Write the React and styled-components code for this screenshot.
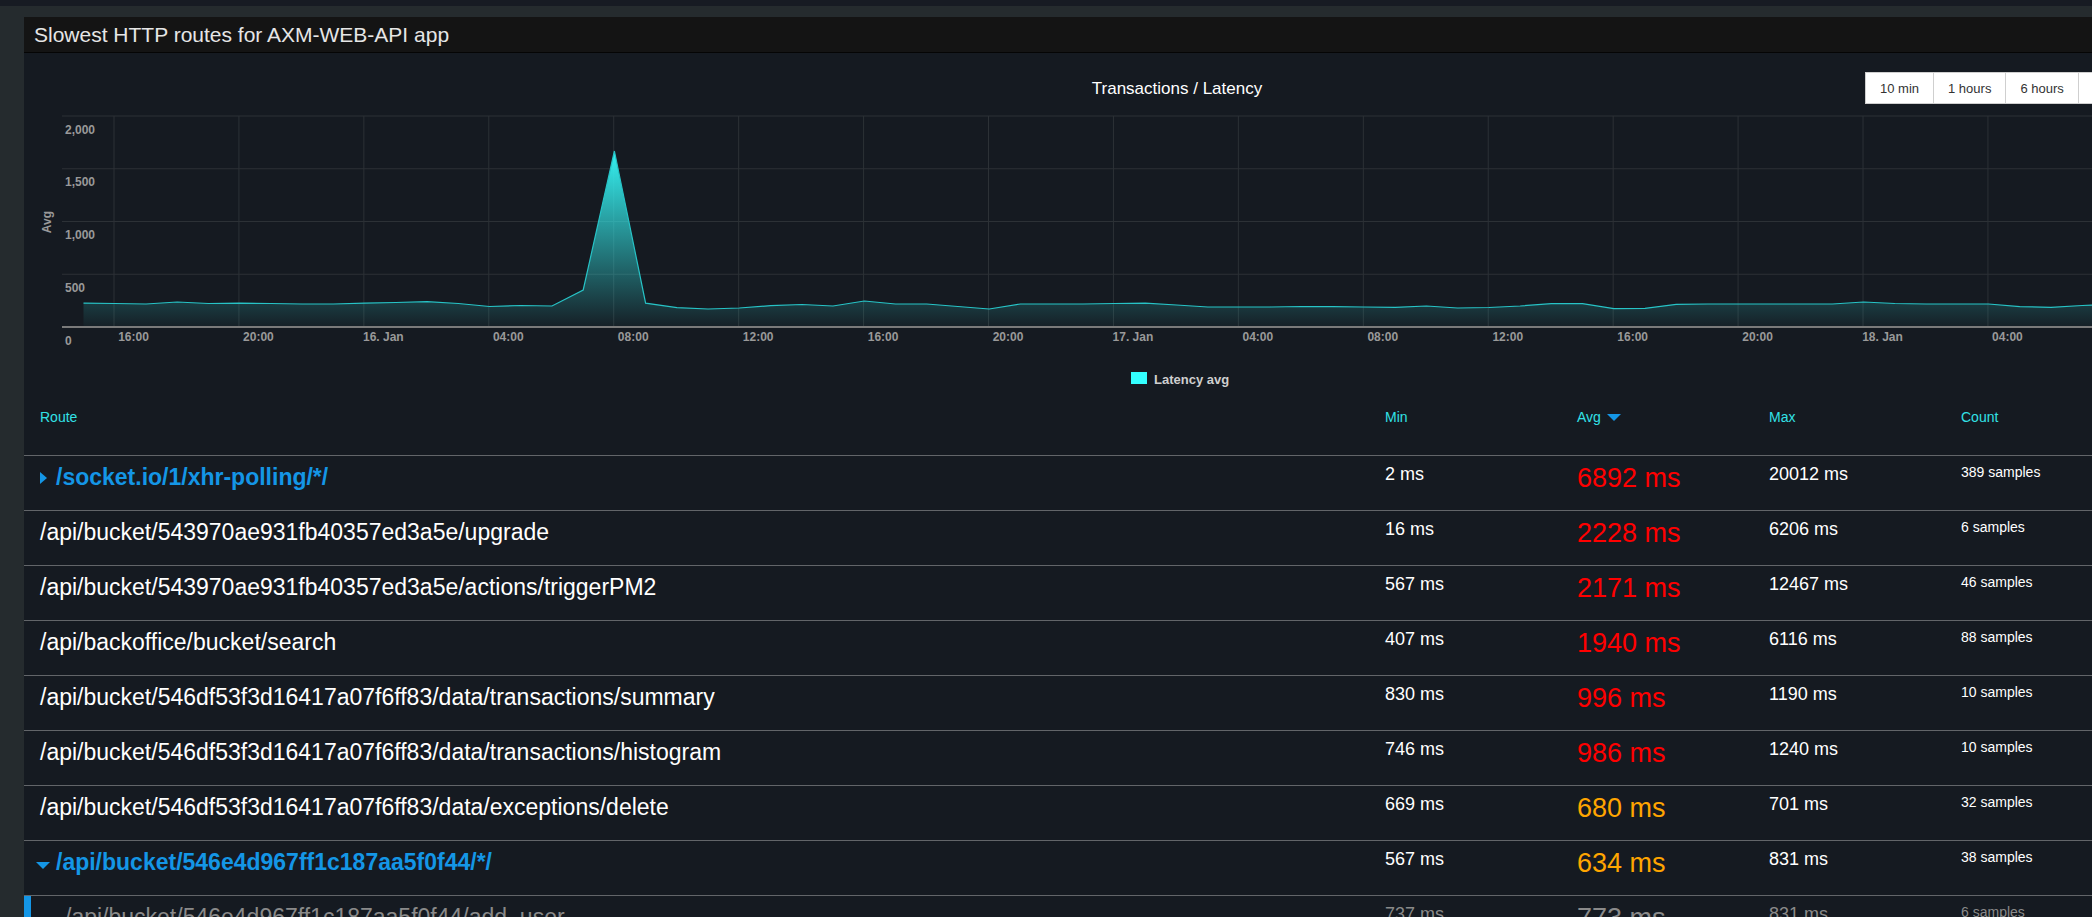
import React from 'react';
import styled, { createGlobalStyle } from 'styled-components';

const GlobalStyle = createGlobalStyle`
  * { box-sizing: border-box; }
  html, body { margin: 0; padding: 0; overflow: hidden; background: #252b2e; }
  body { font-family: "Liberation Sans", Arial, sans-serif; }
`;

const Page = styled.div`
  width: 2200px;
  min-height: 100vh;
  background: #252b2e;
  border-top: 6px solid #171b23;
  padding: 11px 0 0 24px;
`;

const Panel = styled.section`
  width: 2160px;
  background: #151a21;
`;

const PanelHeader = styled.header`
  height: 36px;
  display: flex;
  align-items: center;
  padding-left: 10px;
  background: #141414;
  border-bottom: 1px solid #050505;
  color: #e6e6e6;
  font-size: 21px;
`;

const ChartArea = styled.div`
  position: relative;
  height: 346px;
  svg { display: block; }
`;

const RangeButtons = styled.div`
  position: absolute;
  top: 19px;
  left: 1842px;
  display: flex;
`;

const RangeButton = styled.button`
  height: 32px;
  padding: 0 14px;
  margin-left: -1px;
  background: #fff;
  border: 1px solid #cfcfcf;
  color: #333;
  font-family: "Liberation Sans", Arial, sans-serif;
  font-size: 13px;
  cursor: pointer;
  white-space: nowrap;
`;

const COLS = '1345px repeat(4, 192px)';

const HeadRow = styled.div`
  display: grid;
  grid-template-columns: ${COLS};
  height: 56px;
`;

const HeadCell = styled.div`
  display: flex;
  align-items: center;
  gap: 6px;
  height: 28px;
  padding: 8px 16px 0;
  color: #32e1e6;
  font-size: 14px;
  line-height: 20px;
`;

const Row = styled.div`
  display: grid;
  grid-template-columns: ${COLS};
  height: 55px;
  border-top: 1px solid #626569;
  box-shadow: ${p => (p.$child ? 'inset 7px 0 0 #1496e6' : 'none')};
`;

const Cell = styled.div`
  padding: 8px 16px 0;
  color: ${p => (p.$muted ? '#8a8a8a' : '#fff')};
  font-size: ${p => p.$size || 18}px;
  line-height: 1.2;
  white-space: nowrap;
`;

const RouteCell = styled.div`
  display: flex;
  align-items: flex-start;
  padding: 8px 16px 0 ${p => (p.$child ? 41 : 16)}px;
  color: ${p => (p.$group ? '#1496e6' : p.$child ? '#8a8a8a' : '#fff')};
  font-weight: ${p => (p.$group ? 700 : 400)};
  font-size: 23px;
  line-height: 1.2;
  white-space: nowrap;
`;

const AvgCell = styled(Cell)`
  font-size: 27px;
  line-height: 1.1;
  color: ${p => ({ high: '#ff0000', mid: '#ffa500', muted: '#8a8a8a' }[p.$level])};
`;

const CaretBox = styled.span`
  display: inline-flex;
  justify-content: center;
  align-items: center;
  width: 16px;
  height: 27px;
  margin-left: -5px;
  margin-right: 5px;
`;

const Caret = styled.span`
  width: 0;
  height: 0;
  ${p =>
    p.$dir === 'right'
      ? `border-top: 6px solid transparent; border-bottom: 6px solid transparent; border-left: 7px solid ${p.$color};`
      : `border-left: 7px solid transparent; border-right: 7px solid transparent; border-top: 7px solid ${p.$color};`}
  ${p => (p.$dir === 'down' && p.$shift ? 'margin-top: 6px;' : '')}
`;

const latency = [
  227, 223, 218, 237, 223, 227, 223, 218, 218, 227, 232, 240, 223, 194, 204, 199,
  351, 1668, 227, 183, 171, 180, 202, 213, 199, 246, 218, 218, 194, 171, 218, 218,
  218, 223, 227, 209, 190, 190, 190, 194, 192, 190, 187, 199, 180, 185, 199, 221,
  221, 173, 177, 215, 218, 218, 218, 218, 218, 237, 223, 218, 218, 218, 192, 187,
  204, 218,
];

const xTicks = [
  '16:00', '20:00', '16. Jan', '04:00', '08:00', '12:00', '16:00', '20:00',
  '17. Jan', '04:00', '08:00', '12:00', '16:00', '20:00', '18. Jan', '04:00',
];

const yTicks = [0, 500, 1000, 1500, 2000];

const PLOT_LEFT = 62;
const PLOT_RIGHT = 2184;
const AXIS_Y = 327;
const yPos = v => AXIS_Y - v * 0.1055;
const xPos = i => 83.5 + i * 31.23;

const LatencyChart = () => {
  const pts = latency.map((v, i) => `${xPos(i).toFixed(1)},${yPos(v).toFixed(1)}`);
  const line = `M${pts.join(' L')}`;
  const last = xPos(latency.length - 1).toFixed(1);
  const area = `${line} L${last},326 L${xPos(0)},326 Z`;
  const label = { fontFamily: '"Liberation Sans", Arial, sans-serif', fontWeight: 700, fontSize: 12, fill: '#999' };

  return (
    <svg width="2160" height="346" viewBox="24 53 2160 346">
      <defs>
        <linearGradient id="latFill" x1="0" y1="0" x2="0" y2="1">
          <stop offset="0" stopColor="#35f2f2" stopOpacity="1" />
          <stop offset="1" stopColor="#35f2f2" stopOpacity="0.03" />
        </linearGradient>
      </defs>
      <text x="1177" y="94" textAnchor="middle" fill="#fff" fontSize="17" fontFamily='"Liberation Sans", Arial, sans-serif'>
        Transactions / Latency
      </text>
      {yTicks.filter(v => v > 0).map(v => (
        <line key={v} x1={PLOT_LEFT} x2={PLOT_RIGHT} y1={yPos(v)} y2={yPos(v)} stroke="#2c3136" />
      ))}
      {xTicks.map((t, i) => (
        <line key={i} x1={114 + i * 124.93} x2={114 + i * 124.93} y1={116} y2={AXIS_Y} stroke="#2c3136" />
      ))}
      <path d={area} fill="url(#latFill)" />
      <path d={line} fill="none" stroke="#27c3c6" strokeWidth="1.2" />
      <line x1={PLOT_LEFT} x2={PLOT_RIGHT} y1={AXIS_Y} y2={AXIS_Y} stroke="#7a7a7a" strokeWidth="2" />
      {yTicks.map(v => (
        <text key={v} x="65" y={yPos(v) + 17.5} {...label}>
          {v.toLocaleString('en-US')}
        </text>
      ))}
      {xTicks.map((t, i) => (
        <text key={i} x={133.5 + i * 124.93} y="341" textAnchor="middle" {...label}>
          {t}
        </text>
      ))}
      <text x="51" y="222" textAnchor="middle" transform="rotate(-90 51 222)" {...label}>
        Avg
      </text>
      <rect x="1131" y="372" width="16" height="12" fill="#33ffff" />
      <text x="1154" y="384" fontFamily='"Liberation Sans", Arial, sans-serif' fontWeight="700" fontSize="13" fill="#cfcfcf">
        Latency avg
      </text>
    </svg>
  );
};

const routes = [
  { route: '/socket.io/1/xhr-polling/*/', group: 'right', min: 2, avg: 6892, max: 20012, count: 389 },
  { route: '/api/bucket/543970ae931fb40357ed3a5e/upgrade', min: 16, avg: 2228, max: 6206, count: 6 },
  { route: '/api/bucket/543970ae931fb40357ed3a5e/actions/triggerPM2', min: 567, avg: 2171, max: 12467, count: 46 },
  { route: '/api/backoffice/bucket/search', min: 407, avg: 1940, max: 6116, count: 88 },
  { route: '/api/bucket/546df53f3d16417a07f6ff83/data/transactions/summary', min: 830, avg: 996, max: 1190, count: 10 },
  { route: '/api/bucket/546df53f3d16417a07f6ff83/data/transactions/histogram', min: 746, avg: 986, max: 1240, count: 10 },
  { route: '/api/bucket/546df53f3d16417a07f6ff83/data/exceptions/delete', min: 669, avg: 680, max: 701, count: 32 },
  { route: '/api/bucket/546e4d967ff1c187aa5f0f44/*/', group: 'down', min: 567, avg: 634, max: 831, count: 38 },
  { route: '/api/bucket/546e4d967ff1c187aa5f0f44/add_user', child: true, min: 737, avg: 773, max: 831, count: 6 },
];

const levelOf = r => (r.child ? 'muted' : r.avg >= 900 ? 'high' : 'mid');

export default function App() {
  return (
    <>
      <GlobalStyle />
      <Page>
        <Panel>
          <PanelHeader>Slowest HTTP routes for AXM-WEB-API app</PanelHeader>
          <ChartArea>
            <LatencyChart />
            <RangeButtons>
              {['10 min', '1 hours', '6 hours', '24 hours', '7 days'].map(b => (
                <RangeButton key={b}>{b}</RangeButton>
              ))}
            </RangeButtons>
          </ChartArea>
          <HeadRow>
            <HeadCell>Route</HeadCell>
            <HeadCell>Min</HeadCell>
            <HeadCell>
              Avg <Caret $dir="down" $color="#1496e6" />
            </HeadCell>
            <HeadCell>Max</HeadCell>
            <HeadCell>Count</HeadCell>
          </HeadRow>
          {routes.map(r => (
            <Row key={r.route} $child={r.child}>
              <RouteCell $group={!!r.group} $child={r.child}>
                {r.group && (
                  <CaretBox>
                    <Caret $dir={r.group} $color="#1496e6" $shift />
                  </CaretBox>
                )}
                {r.route}
              </RouteCell>
              <Cell $muted={r.child}>{r.min} ms</Cell>
              <AvgCell $level={levelOf(r)}>{r.avg} ms</AvgCell>
              <Cell $muted={r.child}>{r.max} ms</Cell>
              <Cell $muted={r.child} $size={14}>{r.count} samples</Cell>
            </Row>
          ))}
        </Panel>
      </Page>
    </>
  );
}
